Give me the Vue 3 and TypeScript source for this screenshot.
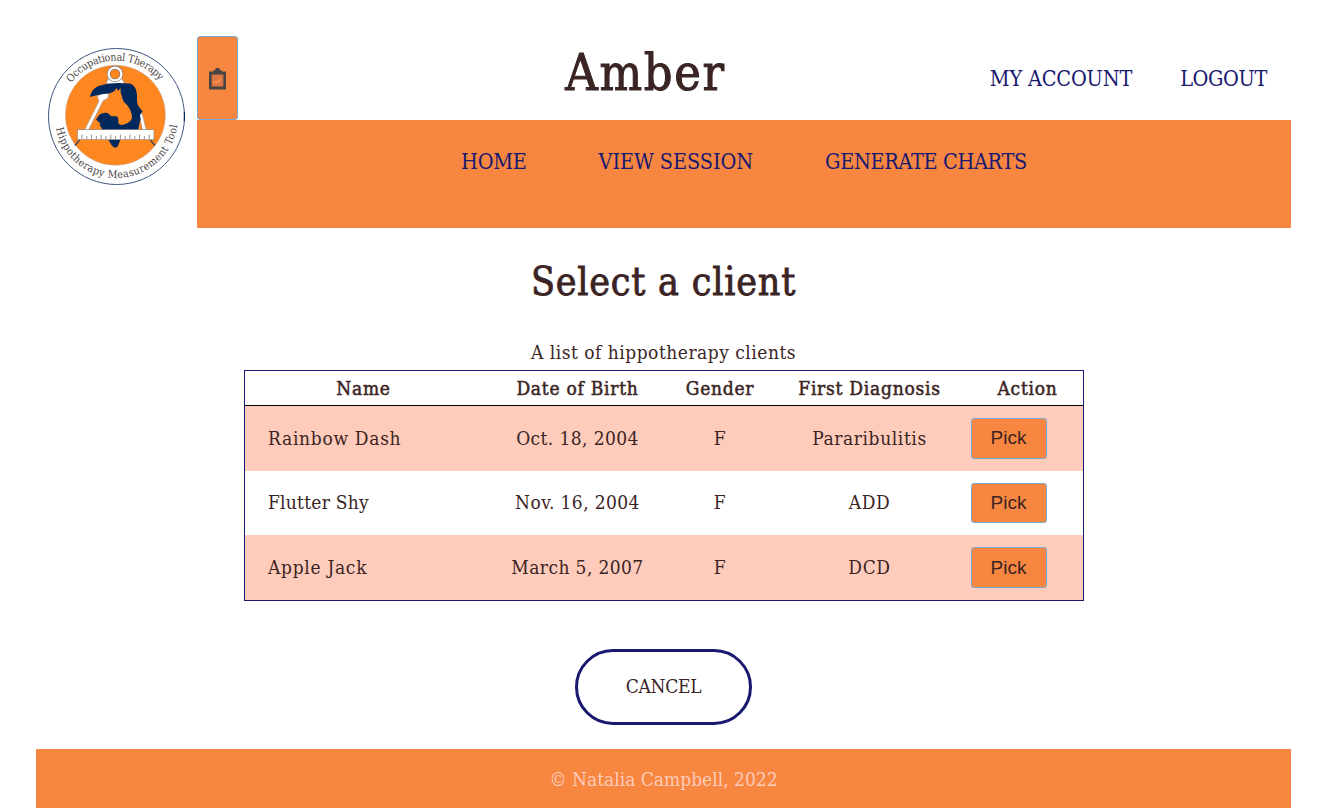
<script setup lang="ts">
interface Client {
  name: string
  birth: string
  gender: string
  diagnosis: string
}

const clients: Client[] = [
  { name: 'Rainbow Dash', birth: 'Oct. 18, 2004', gender: 'F', diagnosis: 'Pararibulitis' },
  { name: 'Flutter Shy', birth: 'Nov. 16, 2004', gender: 'F', diagnosis: 'ADD' },
  { name: 'Apple Jack', birth: 'March 5, 2007', gender: 'F', diagnosis: 'DCD' },
]

const ticks: number[] = Array.from({ length: 15 }, (_, i) => 34 + i * 4.8)
</script>

<template>
  <div class="page">
    <header class="header">
      <div class="logo">
        <svg width="137" height="137" viewBox="0 0 137 137">
          <defs>
            <path id="arc-top" d="M23.3 34.9 A56 56 0 0 1 112.6 34.4" />
            <path id="arc-bottom" d="M8.200 80.300 A61.500 61.500 0 0 0 129.900 72.500" />
          </defs>
          <circle cx="68.5" cy="68.5" r="68" fill="#fff" stroke="#3d5580" stroke-width="1" />
          <path d="M136.4 64v9" stroke="#00285c" stroke-width="1.2" />
          <circle cx="67.4" cy="67.2" r="50" fill="#ff8720" stroke="#b8a090" stroke-width=".5" />
          <path d="M61 29 L58.500 34 L59.500 38 H76 L76.500 35 L73 29Z" fill="#fff" stroke="#8a7a78" stroke-width=".8" />
          <path d="M49 48 Q57 44 61 45 L60 50 L55 53 L40.500 82 L36.500 82 L51 53Z" fill="#fff" stroke="#a09088" stroke-width=".7" />
          <path d="M91 66 L94 65 L98.400 82 L94.500 82Z" fill="#fff" stroke="#a09088" stroke-width=".7" />
          <path
            d="M42 49 C43 43 47 39 52 37.500 C61 34.500 72 34.500 82 35.500 C88 38 89.500 43 89 53 L90 57.500 L94.500 63.500 L92 67 L92.500 71 L90 82 L54 82 L53.700 80 L51.500 77 L52.500 75.500 L48 71.500 C50 69.500 51 66 54 65.500 C59 63.500 61 66 63 68 C66 69 69 67 70 70 C71 73 69 76 73 77 C77 77 83 74 84 70 C84 65 82 59 76 54 C74 51 74 47 72.700 45 L72.500 40 L70 43 L68.500 40 L66 43.500 L61 45.500 C53 46 49 47 42 49Z"
            fill="#00285c"
          />
          <path d="M60 91 L63.500 97 Q67 102 70 98 L72.500 91Z" fill="#00285c" />
          <circle cx="67" cy="26" r="6.4" fill="#ff8720" stroke="#807472" stroke-width="3.6" />
          <circle cx="67" cy="26" r="6.4" fill="none" stroke="#fff" stroke-width="2.3" />
          <path d="M32 91 L30 94 L26.800 97.500 M102 91 L104 94 L107 97.500" fill="none" stroke="#354158" stroke-width="1.300" />
          <rect x="29.4" y="81.7" width="76.6" height="10" fill="#fff" stroke="#857b78" stroke-width=".6" />
          <path v-for="(x, i) in ticks" :key="i" :d="`M${x} 91v${i % 2 ? -3 : -4.5}`" stroke="#666" stroke-width=".7" />
          <text class="arc-text"><textPath href="#arc-top" textLength="101">Occupational Therapy</textPath></text>
          <text class="arc-text"><textPath href="#arc-bottom" textLength="172">Hippotherapy Measurement Tool</textPath></text>
        </svg>
      </div>
      <div class="head-main">
        <div class="top">
          <button class="clip-btn" type="button">
            <svg class="clip-icon" width="17" height="23" viewBox="0 0 17 23">
              <path d="M0 4.500H4.500V3h2V1h4v2h2v1.500H17V22.500H0Z" fill="#484545" />
              <path d="M2.700 7.500h11.600v12H2.700Z" fill="#de7843" stroke="#91553a" stroke-width=".7" />
              <path d="M4 15h4.500l3-2.500" fill="none" stroke="#ff9854" stroke-width="1.500" />
            </svg>
          </button>
          <h1>Amber</h1>
          <nav class="account">
            <a>MY ACCOUNT</a>
            <a class="out">LOGOUT</a>
          </nav>
        </div>
        <nav class="main-nav">
          <a class="home">HOME</a>
          <a>VIEW SESSION</a>
          <a class="charts">GENERATE CHARTS</a>
        </nav>
      </div>
    </header>

    <main>
      <h2>Select a client</h2>
      <table>
        <caption>A list of hippotherapy clients</caption>
        <colgroup>
          <col class="c1" /><col class="c2" /><col class="c3" /><col class="c4" /><col class="c5" />
        </colgroup>
        <thead>
          <tr>
            <th>Name</th>
            <th>Date of Birth</th>
            <th>Gender</th>
            <th>First Diagnosis</th>
            <th>Action</th>
          </tr>
        </thead>
        <tbody>
          <tr v-for="c in clients" :key="c.name">
            <td class="name">{{ c.name }}</td>
            <td class="birth">{{ c.birth }}</td>
            <td>{{ c.gender }}</td>
            <td>{{ c.diagnosis }}</td>
            <td class="action"><button class="pick" type="button">Pick</button></td>
          </tr>
        </tbody>
      </table>
      <a class="cancel">CANCEL</a>
    </main>
    <footer>© Natalia Campbell, 2022</footer>
  </div>
</template>

<style>
html, body { margin: 0; background: #fff; overflow: hidden; }
</style>

<style scoped>
.page {
  box-sizing: border-box;
  height: 808px;
  padding: 36px 36px 0;
  display: flex;
  flex-direction: column;
  color: #3b2424;
  font: 19px/34px "DejaVu Serif Condensed", "DejaVu Serif", serif;
  font-stretch: condensed;
}
.header { display: flex; height: 192px; }
.logo { flex: none; width: 161px; padding: 12px; box-sizing: border-box; }
.logo svg { display: block; }
.arc-text { font-size: 10.5px; fill: #4a4444; }
.head-main { flex: 1; min-width: 0; display: flex; flex-direction: column; }
.top { height: 84px; display: grid; grid-template-columns: 41px 1fr 302px; align-items: center; }
.clip-btn, .pick {
  box-sizing: border-box;
  background: #f68640;
  border: 1px solid #78aad6;
  border-radius: 3px;
  color: #3b2424;
}
.clip-btn { height: 84px; padding: 0; display: flex; align-items: center; justify-content: center; }
.clip-icon { filter: blur(.4px); }
h1 {
  margin: 0 0 10px;
  padding-left: 64px;
  font-size: 50px;
  line-height: 72px;
  font-weight: 400;
  letter-spacing: 1.700px;
  text-align: center;
  -webkit-text-stroke: 1px #3b2424;
}
.account, .main-nav { color: #191970; font-size: 21.500px; white-space: nowrap; }
.account { display: flex; justify-content: flex-end; gap: 48px; padding: 2px 24px 0 0; letter-spacing: -.2px; }
.out { letter-spacing: -.4px; }
.main-nav {
  height: 108px;
  background: #f68640;
  display: flex;
  justify-content: center;
  gap: 72px;
  padding-top: 25px;
  box-sizing: border-box;
  letter-spacing: -.1px;
}
.home { letter-spacing: -.3px; }
.charts { letter-spacing: -.350px; }
main { display: flex; flex-direction: column; align-items: center; }
h2 {
  margin: 24px 0 0;
  height: 84px;
  font-size: 39px;
  line-height: 60px;
  font-weight: 400;
  letter-spacing: .800px;
  -webkit-text-stroke: .8px #3b2424;
}
table {
  box-sizing: border-box;
  width: 840px;
  table-layout: fixed;
  border-collapse: separate;
  border-spacing: 0;
  border: 1px solid #191970;
}
caption { height: 34px; line-height: 32px; letter-spacing: .5px; }
.c1 { width: 237px; }
.c2 { width: 191px; }
.c3 { width: 94px; }
.c4 { width: 205px; }
.c5 { width: 111px; }
th {
  padding: 0 0 0 1px;
  height: 34px;
  border-bottom: 1px solid #000;
  font-weight: 400;
  letter-spacing: .750px;
  -webkit-text-stroke: .5px #3b2424;
  white-space: nowrap;
}
td { padding: 0 0 0 1px; height: 64.660px; line-height: 33px; text-align: center; letter-spacing: .6px; }
td.birth { padding-left: 1px; letter-spacing: .4px; }
tbody tr:nth-child(odd) { background: #ffccbb; }
td.name { text-align: left; padding-left: 23.500px; letter-spacing: .7px; }
tr:nth-child(2) td.name { letter-spacing: .250px; }
td.action { text-align: left; padding-left: 0; }
.pick {
  display: block;
  width: 76px;
  height: 40.500px;
  margin-left: -1px;
  padding: 0;
  font: 19px "Liberation Sans", Arial, sans-serif;
}
.cancel {
  box-sizing: border-box;
  width: 177px;
  height: 76px;
  margin-top: 48px;
  border: 3px solid #191970;
  border-radius: 38px;
  line-height: 68px;
  letter-spacing: -.3px;
  text-align: center;
}
footer {
  margin-top: 24px;
  flex: 1;
  background: #f68640;
  color: #ffccbb;
  text-align: center;
  line-height: 60px;
}
</style>
